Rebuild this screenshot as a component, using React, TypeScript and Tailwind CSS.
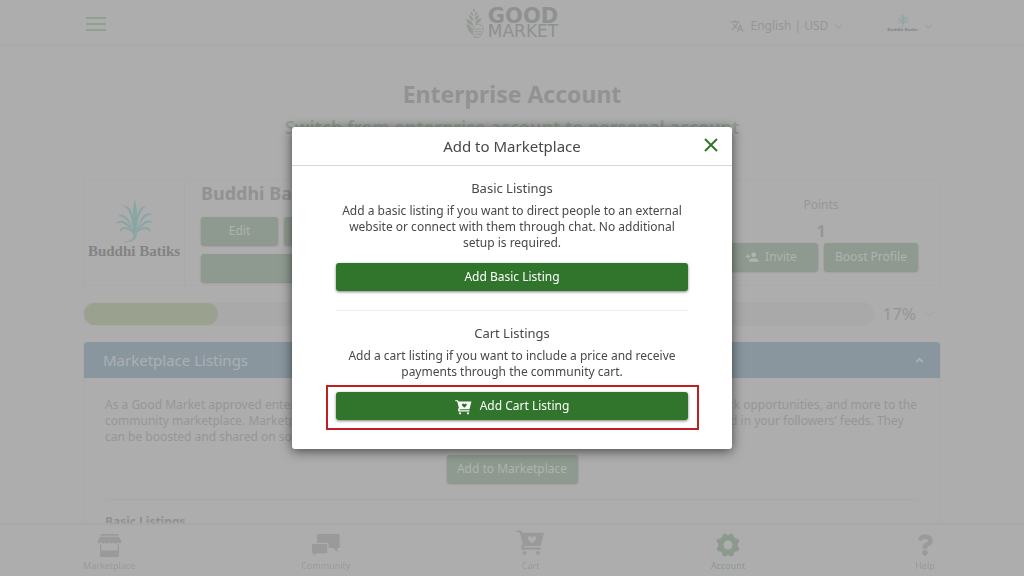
import type { ReactNode } from 'react';
import { MdTranslate, MdPersonAddAlt1 } from 'react-icons/md';
import { FaQuestion } from 'react-icons/fa';

function Chevron({ up = false, className = '' }: { up?: boolean; className?: string }) {
  return (
    <svg viewBox="0 0 10 6" className={className} fill="none" stroke="currentColor" aria-hidden="true">
      <path d={up ? 'M1 5 5 1l4 4' : 'M1 1l4 4 4-4'} />
    </svg>
  );
}

function CartHeart({ className, heart }: { className: string; heart: string }) {
  return (
    <svg viewBox="0 0 30 26" className={className} aria-hidden="true">
      <path d="M0 0h5.2l1 2.5H29L25.5 16H8.2v1.7h17.3V20H6.3a1 1 0 0 1-.8-1v-3.5L7 14 3.8 2H.8z" fill="currentColor" />
      <circle cx="9" cy="23.2" r="2" fill="currentColor" />
      <circle cx="22.8" cy="23.2" r="2" fill="currentColor" />
      <path d="M16.5 13.5 12.8 10c-2-2.3.8-5.6 3.7-2.8 2.9-2.8 5.7.5 3.7 2.8z" fill={heart} />
    </svg>
  );
}

function Lotus({ className }: { className: string }) {
  return (
    <svg viewBox="0 0 112 130" className={className} fill="#89a5a4" aria-hidden="true">
      <path d="M57 0c8 18 9 70 2 101h-4C48 70 50 18 57 0z" />
      <path d="M53 101C49 73 48 27 20 18c13-2 22 5 27 17 8 20 8 44 8 66z" />
      <path d="M61 101c4-28 5-72 31-81-12-2-20 5-25 17-7 20-8 43-8 64z" />
      <path d="M52 102C45 75 29 45 4 50c12-11 26-4 34 10 9 16 13 29 16 42z" />
      <path d="M62 102c7-27 23-60 48-58-12-9-26-2-34 14-9 16-13 31-16 44z" />
      <path d="M52 102C39 83 22 60 0 72c7-13 21-13 31-4 12 10 19 23 23 34z" />
      <path d="M62 102c13-19 30-42 50-31-7-13-19-13-29-3-12 11-19 23-23 34z" />
      <path d="M54 102C40 90 20 78 12 100c-3-13 6-21 17-18 12 4 20 12 27 20z" />
      <path d="M60 102c14-12 34-24 44-2 1-13-7-21-18-18-12 4-20 12-27 20z" />
      <path d="M53 103h9c3 11-7 22-25 25-7 1-14 0-18-2 20 2 35-8 33-16z" />
    </svg>
  );
}

function GoodMarketLogo() {
  return (
    <a href="#home" aria-label="Good Market" className="flex items-center gap-1 pt-0.5 text-[#8f9090]">
      <svg viewBox="0 0 54 90" className="h-[30px] w-[18px]" fill="#949b94" aria-hidden="true">
        <path d="M24 0c4 5 4 9 0 14-4-5-4-9 0-14z" />
        <path d="M22 24c-8-3-9-8-8-13 6 2 8 7 8 13zM26 24c8-3 9-8 8-13-6 2-8 7-8 13z" />
        <path d="M22 38C12 35 9 29 9 21c8 2 13 8 13 17zM26 36c10-2 13-8 13-15-8 1-13 7-13 15z" />
        <path d="M22 54C8 50 1 43 0 34c13 1 21 8 22 20zM27 48c3-11 9-16 19-17-1 9-8 16-19 17z" />
        <path d="M2 47c8 3 14 8 17 16v17C6 71 3 60 2 47z" />
        <path
          d="M25 54c5-6 12-7 16-3 7-1 10 4 9 9 3 6 1 11-2 14-1 6-5 10-9 14H25l-5-12V61zm0 9h20M25 71h21M27 79h16"
          fill="none"
          stroke="#949b94"
          strokeWidth="3"
        />
      </svg>
      <span className="flex flex-col items-center font-['DejaVu_Sans']">
        <span className="text-[21px] font-bold leading-4">GOOD</span>
        <span className="text-[17px] leading-[14px]">MARKET</span>
      </span>
    </a>
  );
}

function MutedButton({ children, label, className = '' }: { children?: ReactNode; label?: string; className?: string }) {
  return (
    <button
      type="button"
      aria-label={label}
      className={`flex h-7 items-center justify-center gap-1.5 rounded-[3px] bg-[#8e9a8f] text-xs text-[#b0b2b0] shadow-[0_1px_2px_#8b8b8b] ${className}`}
    >
      {children}
    </button>
  );
}

function NavItem({ label, children, active = false }: { label: string; children: ReactNode; active?: boolean }) {
  return (
    <a
      href={`#${label.toLowerCase()}`}
      className={`flex min-w-7 flex-col items-center text-[9px] leading-3 ${active ? 'text-[#8c998d]' : 'text-[#9a9a9a]'}`}
    >
      <span className="flex h-[30px] items-center justify-center">{children}</span>
      {label}
    </a>
  );
}

function BottomNav() {
  return (
    <nav className="fixed inset-x-0 bottom-0 h-[52px] border-t border-[#a7a7a7] bg-[#adadad] shadow-[0_-1px_2px_#a9a9a9]">
      <div className="mx-auto flex max-w-[858px] justify-between pr-0.5 pt-[5px]">
        <NavItem label="Marketplace">
          <svg viewBox="0 0 74 70" className="h-[23px] w-[25px]" fill="currentColor" aria-hidden="true">
            <path d="M10 0h54v5H10zM9 8h56l9 14c-1 8-10 8-12 2-2 7-11 7-13 0-2 7-10 7-12 0-2 7-11 7-13 0-2 7-10 7-12 0-3 6-11 6-12-2z" />
            <path d="M8 32h4v18h50V32h4v34l-3 4H11l-3-4z" />
          </svg>
        </NavItem>
        <NavItem label="Community">
          <svg viewBox="0 0 84 66" className="h-[22px] w-[28px]" fill="currentColor" aria-hidden="true">
            <path d="M19 0h60q4 0 4 4v34q0 4-4 4h-4l3 12-15-12H50V30q0-4-4-4H15V4q0-4 4-4z" />
            <path d="M4 30h38q4 0 4 4v20q0 4-4 4H15L3 66l3-8H4q-4 0-4-4V34q0-4 4-4z" />
          </svg>
        </NavItem>
        <NavItem label="Cart">
          <CartHeart className="mb-1 h-[26px] w-[29px]" heart="#adadad" />
        </NavItem>
        <NavItem label="Account" active>
          <svg viewBox="0 0 24 24" className="size-[24px]" fill="currentColor" fillRule="evenodd" aria-hidden="true">
            <path d="M7 1.2 10 .6l1 1.5h2l1-1.5 3 .6 1 3 1.6 1.4 3 .5.8 2.6-1.7 2.1v2.4l1.7 2.1-.9 2.7-3 .5-1.5 1.3-1 3-3 .6-1-1.4h-2l-1 1.4-3-.6-1-3-1.5-1.3-3-.5-.9-2.7 1.7-2.1v-2.4L.6 8.7l.8-2.6 3-.5L6 4.2zM12 7.5a4.500 4.500 0 1 0 0 9 4.500 4.500 0 0 0 0-9z" />
          </svg>
        </NavItem>
        <NavItem label="Help">
          <FaQuestion className="h-6 w-4" />
        </NavItem>
      </div>
    </nav>
  );
}

function GreenButton({ children }: { children: ReactNode }) {
  return (
    <button
      type="button"
      className="flex h-7 w-full items-center justify-center gap-2 rounded-[3px] bg-[#31752c] text-xs text-white shadow-[0_1px_3px_rgba(0,0,0,0.5)]"
    >
      {children}
    </button>
  );
}

function MarketplaceDialog() {
  return (
    <div className="fixed inset-0 flex items-center justify-center">
      <div
        role="dialog"
        aria-modal="true"
        aria-labelledby="dialog-title"
        className="w-[440px] rounded-[3px] bg-white text-center text-[#484848] shadow-[0_2px_12px_rgba(0,0,0,0.6)]"
      >
        <div className="grid h-[39px] grid-cols-[1fr_auto_1fr] items-center border-b border-[#d6d6d6] px-3.5">
          <h2 id="dialog-title" className="col-start-2 text-[15px]">
            Add to Marketplace
          </h2>
          <button type="button" aria-label="Close" className="justify-self-end pb-0.5 text-[#31752c]">
            <svg viewBox="0 0 14 14" className="size-3.5" fill="none" stroke="currentColor" strokeWidth="2" aria-hidden="true">
              <path d="m1 1 12 12M13 1 1 13" />
            </svg>
          </button>
        </div>
        <div className="px-11 pb-[29px] pt-3">
          <section>
            <h3 className="text-[13px] leading-5">Basic Listings</h3>
            <p className="mt-[5px] text-xs leading-4">
              Add a basic listing if you want to direct people to an external website or connect with them through chat. No
              additional setup is required.
            </p>
            <div className="mt-3">
              <GreenButton>Add Basic Listing</GreenButton>
            </div>
          </section>
          <hr className="mb-3 mt-[19px] border-[#eeeeee]" />
          <section>
            <h3 className="text-[13px] leading-5">Cart Listings</h3>
            <p className="mt-[5px] text-xs leading-4">
              Add a cart listing if you want to include a price and receive payments through the community cart.
            </p>
            <div className="relative mt-3">
              <GreenButton>
                <CartHeart className="mt-0.5 h-[15px] w-[17px]" heart="#31752c" />
                Add Cart Listing
              </GreenButton>
              <div className="pointer-events-none absolute -bottom-2.5 -left-2.5 -right-[11px] -top-[7px] border-2 border-[#c01f21]" />
            </div>
          </section>
        </div>
      </div>
    </div>
  );
}

export default function App() {
  return (
    <div className="h-screen overflow-hidden bg-[#adadad] font-['Noto_Sans',sans-serif] text-[#969696]">
      <header className="h-[46px] border-b-2 border-[#aaaaaa]">
        <div className="mx-auto grid h-full max-w-[858px] grid-cols-[1fr_auto_1fr] items-center">
          <button type="button" aria-label="Menu" className="ml-[3px] justify-self-start pb-1 pt-2">
            <svg viewBox="0 0 20 14" className="h-3.5 w-5" stroke="#90a091" strokeWidth="2" aria-hidden="true">
              <path d="M0 1h20M0 7h20M0 13h20" />
            </svg>
          </button>
          <GoodMarketLogo />
          <div className="flex items-center justify-end gap-11 pr-2 pt-2">
            <button type="button" className="flex items-center gap-1.5 text-xs">
              <MdTranslate className="size-3.5" />
              English | USD
              <Chevron className="h-[5px] w-[9px]" />
            </button>
            <button type="button" aria-label="Buddhi Batiks account" className="flex items-center gap-1.5">
              <span className="-mt-2 flex flex-col items-center">
                <Lotus className="h-3.5 w-3" />
                <span className="font-['Liberation_Serif'] text-[5px] font-bold leading-[5px] text-[#848484]">Buddhi Batiks</span>
              </span>
              <Chevron className="h-[5px] w-[9px]" />
            </button>
          </div>
        </div>
      </header>

      <main className="mx-auto max-w-[858px]">
        <h1 className="pt-8 text-center text-[23px] font-bold leading-8 text-[#929292]">Enterprise Account</h1>
        <p className="mt-[5px] text-center text-lg font-semibold leading-6 text-[#8e9e8f]">
          Switch from enterprise account to personal account
        </p>

        <section className="mt-[41px] flex border-y border-r border-[#aaaaaa]">
          <div className="flex h-[104px] w-[102px] flex-col items-center border-x border-[#a9a9a9] pt-[19px]">
            <Lotus className="h-[43px] w-[37px]" />
            <span className="whitespace-nowrap font-['Liberation_Serif'] text-[15px] font-bold leading-4 text-[#838383]">
              Buddhi Batiks
            </span>
          </div>
          <div className="ml-4 w-[380px]">
            <h2 className="text-lg font-bold leading-6 text-[#929292]">Buddhi Batiks</h2>
            <div className="mt-3 flex gap-1.5">
              <MutedButton className="w-[77px]">Edit</MutedButton>
              <MutedButton className="flex-1" label="View profile" />
            </div>
            <MutedButton className="mt-[9px] w-full" label="Share profile" />
          </div>
          <div className="ml-auto flex flex-col items-center pr-[22px] pt-3.5 text-center">
            <span className="text-xs leading-5">Points</span>
            <strong className="mt-1 text-base leading-6">1</strong>
            <div className="flex gap-1.5">
              <MutedButton className="w-[94px]">
                <MdPersonAddAlt1 className="size-3.5 -scale-x-100" />
                Invite
              </MutedButton>
              <MutedButton className="w-[94px]">Boost Profile</MutedButton>
            </div>
          </div>
        </section>

        <div className="mt-4 flex items-center gap-2">
          <div className="h-6 flex-1 rounded-full bg-[#a9a9a9] p-px">
            <div className="h-full w-[17%] rounded-full bg-[#9aa28f]" />
          </div>
          <span className="text-[17px] leading-6">17%</span>
          <Chevron className="mr-1.5 h-[6px] w-[11px] text-[#a4a4a4]" />
        </div>

        <section className="mt-4 border-x border-[#a9a9a9]">
          <h2>
            <button
              type="button"
              aria-expanded="true"
              className="flex h-9 w-full items-center justify-between rounded-t bg-[#89969e] pl-[19px] pr-4 text-[15px] text-[#acb0b2]"
            >
              Marketplace Listings
              <Chevron up className="h-[5px] w-[9px] stroke-2" />
            </button>
          </h2>
          <div className="px-[21px] pt-[19px]">
            <p className="text-xs leading-4 lg:whitespace-nowrap">
              As a Good Market approved enterprise, you can add your products, services, events, stories, jobs, volunteer work
              opportunities, and more to the <br />
              community marketplace. Marketplace listings appear on your profile, in search results, in community pages, and in
              your followers’ feeds. They <br />
              can be boosted and shared on social media.
            </p>
            <div className="mt-2.5 flex justify-center">
              <MutedButton className="w-[131px]">Add to Marketplace</MutedButton>
            </div>
            <hr className="mt-4 border-[#a8a8a8]" />
            <h3 className="mt-3 text-xs font-bold leading-5 text-[#909090]">Basic Listings</h3>
          </div>
        </section>
      </main>

      <BottomNav />
      <MarketplaceDialog />
    </div>
  );
}
